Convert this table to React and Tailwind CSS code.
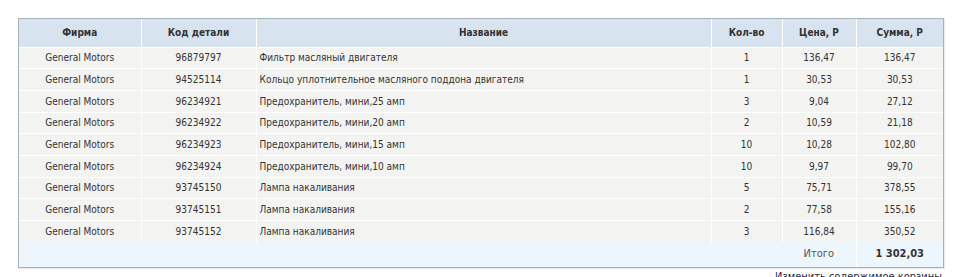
import React from "react";

const rows = [
  ["General Motors", "96879797", "Фильтр масляный двигателя", "1", "136,47", "136,47"],
  ["General Motors", "94525114", "Кольцо уплотнительное масляного поддона двигателя", "1", "30,53", "30,53"],
  ["General Motors", "96234921", "Предохранитель, мини,25 амп", "3", "9,04", "27,12"],
  ["General Motors", "96234922", "Предохранитель, мини,20 амп", "2", "10,59", "21,18"],
  ["General Motors", "96234923", "Предохранитель, мини,15 амп", "10", "10,28", "102,80"],
  ["General Motors", "96234924", "Предохранитель, мини,10 амп", "10", "9,97", "99,70"],
  ["General Motors", "93745150", "Лампа накаливания", "5", "75,71", "378,55"],
  ["General Motors", "93745151", "Лампа накаливания", "2", "77,58", "155,16"],
  ["General Motors", "93745152", "Лампа накаливания", "3", "116,84", "350,52"],
];

const headers = ["Фирма", "Код детали", "Название", "Кол-во", "Цена, Р", "Сумма, Р"];

export default function App() {
  return (
    <div className="w-[960px] h-[277px] overflow-hidden bg-white pt-[18px] pl-[18px] font-['DejaVu_Sans_Condensed','DejaVu_Sans',sans-serif] text-[10px] text-[#333]">
      <div className="w-[926px] border border-[#a3b4c0] shadow-[1px_1px_1px_rgba(0,0,0,0.08)]">
        <table className="w-full table-fixed border-collapse">
          <colgroup>
            <col className="w-[122px]" />
            <col className="w-[115px]" />
            <col className="w-[455px]" />
            <col className="w-[71px]" />
            <col className="w-[74px]" />
            <col />
          </colgroup>
          <thead>
            <tr className="h-[28px] bg-[#d7e3ef]">
              {headers.map((h) => (
                <th key={h} className="border-l border-white first:border-l-0 text-center font-bold text-[#333]">
                  {h}
                </th>
              ))}
            </tr>
          </thead>
          <tbody>
            {rows.map((r, i) => (
              <tr key={i} className="h-[21.7px] bg-[#f3f3f1] border-t border-white">
                {r.map((c, j) => (
                  <td
                    key={j}
                    className={
                      "border-l border-white first:border-l-0 " +
                      (j === 2 ? "text-left pl-[3px]" : "text-center")
                    }
                  >
                    {c}
                  </td>
                ))}
              </tr>
            ))}
            <tr className="h-[25px] bg-[#eef6fd]">
              <td colSpan={4}></td>
              <td className="text-center text-[#555] text-[11px]">Итого</td>
              <td className="text-center font-bold border-l border-white text-[11px]">1 302,03</td>
            </tr>
          </tbody>
        </table>
      </div>
      <div className="w-[926px] text-right pt-[2px] pr-[2px] text-[11px] leading-[14px] text-[#1b2a4a] underline">
        Изменить содержимое корзины
      </div>
    </div>
  );
}
